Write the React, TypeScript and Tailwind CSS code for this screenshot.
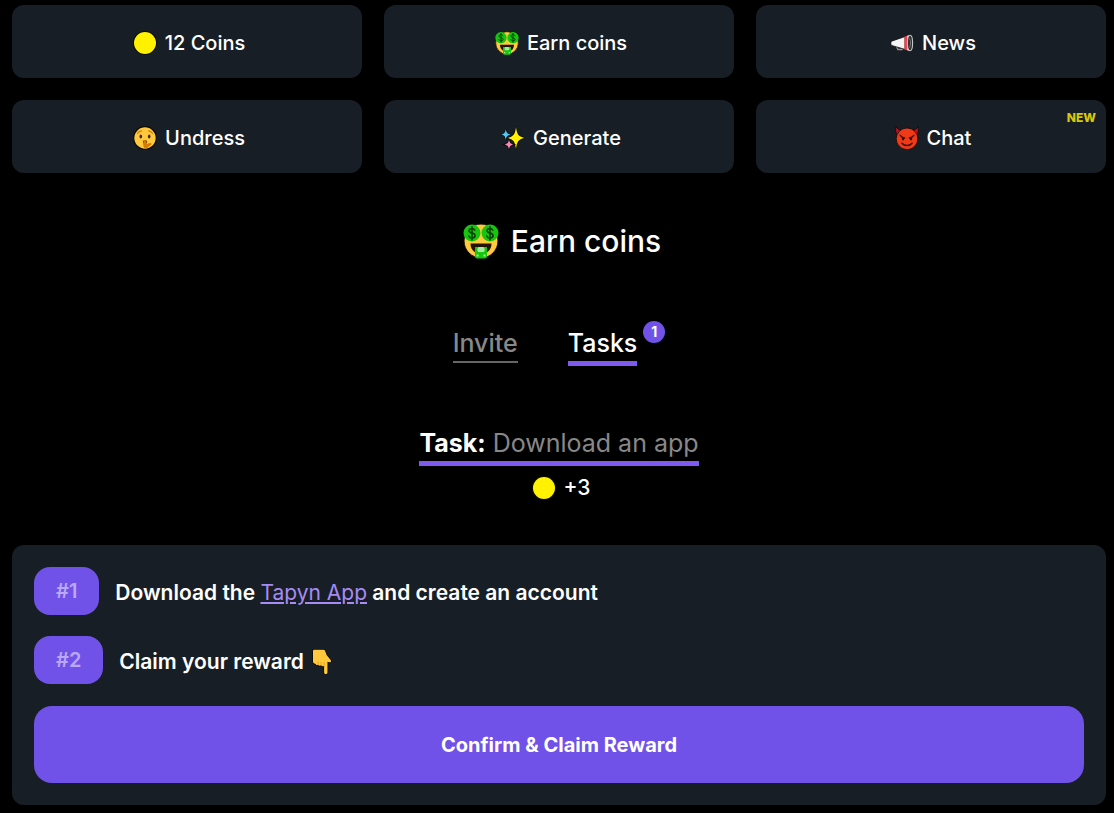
import { useState } from 'react'
import type { ReactNode } from 'react'

type IconProps = { className?: string }

function CoinIcon({ className }: IconProps) {
  return (
    <svg viewBox="0 0 24 24" className={className} aria-hidden="true">
      <circle cx="12" cy="12" r="12" fill="#0b0c00" />
      <circle cx="12" cy="12" r="11" fill="#fff100" />
    </svg>
  )
}

function MoneyFaceIcon({ className }: IconProps) {
  return (
    <svg viewBox="0 0 36 36" className={className} aria-hidden="true">
      <circle cx="18" cy="18" r="17" fill="#ffc83d" stroke="#0a0a0a" strokeWidth="1" />
      <circle cx="9" cy="10" r="8.5" fill="#16c60c" />
      <circle cx="27" cy="10" r="8.5" fill="#16c60c" />
      <g fill="none" stroke="#0a3a08" strokeWidth="1.5" strokeLinecap="round">
        <path d="M11.8 7.2C11.2 5.9 10 5.4 9 5.4c-1.7 0-3 .9-3 2.3 0 3 6.1 1.7 6.1 4.8 0 1.5-1.4 2.5-3.1 2.5-1.4 0-2.7-.7-3.2-2.1M9 3.7v13" />
        <path d="M29.8 7.2c-.6-1.3-1.8-1.8-2.8-1.8-1.7 0-3 .9-3 2.3 0 3 6.1 1.7 6.1 4.8 0 1.5-1.4 2.5-3.1 2.5-1.4 0-2.7-.7-3.2-2.1M27 3.7v13" />
      </g>
      <path d="M7.5 20.5h21c0 6-4.3 10.500-10.500 10.500s-10.500-4.500-10.500-10.500z" fill="#221508" />
      <path d="M12 24h12v9.500c0 1.200-.8 2-2 2h-8c-1.200 0-2-.8-2-2z" fill="#16c60c" />
      <rect x="14.500" y="24" width="7" height="5" rx="1.500" fill="#a7e8a2" />
      <path d="M13.500 31.500h2v2h-2zM20.500 31.500h2v2h-2z" fill="#a7e8a2" />
    </svg>
  )
}

function MegaphoneIcon({ className }: IconProps) {
  return (
    <svg viewBox="0 0 24 24" className={className} aria-hidden="true">
      <path d="M6 15l2 3.500h4l1-3" fill="none" stroke="#9a9a9a" strokeWidth="1.300" />
      <path d="M1.500 10.200L15 5.600v12.800L1.500 14.400c-.9-1.100-.9-3.100 0-4.200z" fill="#f5f5f5" stroke="#0a0a0a" strokeWidth=".8" />
      <path d="M14.500 5.700l2.500-.9v14.400l-2.500-.8z" fill="#f0404c" />
      <path d="M17 4.700l2.500-.7v16l-2.500-.8z" fill="#f7c4c7" />
      <ellipse cx="20" cy="12" rx="2.600" ry="7.800" fill="#303030" stroke="#c8c8c8" strokeWidth="1.100" />
      <path d="M19.500 7.500c1.400 2 1.400 7 0 9" fill="none" stroke="#777" strokeWidth="1" />
    </svg>
  )
}

function HushFaceIcon({ className }: IconProps) {
  return (
    <svg viewBox="0 0 24 24" className={className} aria-hidden="true">
      <circle cx="12" cy="12" r="11.300" fill="#ffc83d" stroke="#0a0a0a" strokeWidth="1.200" />
      <path d="M4.500 7.500c.8-1.600 2.200-2.500 4-2.600M15.500 4.900c1.800.1 3.200 1 4 2.600" fill="none" stroke="#d67d00" strokeWidth="1.200" strokeLinecap="round" />
      <ellipse cx="7.800" cy="10.500" rx="1.300" ry="1.900" fill="#402a32" />
      <ellipse cx="16.200" cy="10.500" rx="1.300" ry="1.900" fill="#402a32" />
      <circle cx="12" cy="16" r="2.100" fill="#5a3a20" />
      <path d="M11 14.300c.7-.6 1.800-.3 2 .6l.5 3 3.800-.9c1.200-.2 1.700 1.100.8 1.800l-3.800 3c-1.400 1-3.300.7-3.800-1.200l-.3-2z" fill="#d67d00" />
    </svg>
  )
}

function SparklesIcon({ className }: IconProps) {
  return (
    <svg viewBox="0 0 24 24" className={className} aria-hidden="true" stroke="#0a0a0a" strokeWidth="1.500" paintOrder="stroke">
      <path d="M15 .8c1 7.700 2.200 9.600 8.500 11.200-6.300 1.600-7.500 3.500-8.500 11.200-1-7.700-2.200-9.600-8.500-11.200C12.800 10.400 14 8.500 15 .8z" fill="#fff100" />
      <path d="M4.800 3c.6 3.800 1.500 4.700 4.700 5.500-3.200.8-4.100 1.700-4.700 5.500C4.200 10.200 3.300 9.300.1 8.500 3.300 7.700 4.200 6.800 4.800 3z" fill="#50c8f0" />
      <path d="M8 13.500c.6 3.400 1.500 4.200 4.500 5-3 .8-3.900 1.600-4.500 5-.6-3.400-1.500-4.200-4.500-5 3-.8 3.900-1.600 4.500-5z" fill="#f58bb4" />
    </svg>
  )
}

function DevilIcon({ className }: IconProps) {
  return (
    <svg viewBox="0 0 24 24" className={className} aria-hidden="true">
      <path d="M1 .8c-.8 3.500-.3 6.500 1.500 8.800l5.500-5C4.700 4.300 2.500 3.200 1 .8zM23 .8c.8 3.500.3 6.500-1.500 8.800l-5.500-5c3.300-.3 5.500-1.400 7-3.800z" fill="#c50f1f" stroke="#0a0a0a" strokeWidth=".8" />
      <circle cx="12" cy="12.800" r="10.800" fill="#f03a17" stroke="#0a0a0a" strokeWidth=".8" />
      <path d="M5 9.200c1.200 1.800 2.700 2.700 4.700 2.800M19 9.200c-1.200 1.800-2.700 2.700-4.700 2.800" fill="none" stroke="#3c1010" strokeWidth="1.300" strokeLinecap="round" />
      <ellipse cx="8" cy="12.800" rx="1.200" ry="1.700" fill="#3c1010" />
      <ellipse cx="16" cy="12.800" rx="1.200" ry="1.700" fill="#3c1010" />
      <path d="M7 17.200c2.500 3.200 7.500 3.200 10 0" fill="none" stroke="#3c1010" strokeWidth="1.500" strokeLinecap="round" />
    </svg>
  )
}

function PointDownIcon({ className }: IconProps) {
  return (
    <svg viewBox="0 0 20 26" className={className} aria-hidden="true">
      <path
        d="M1 1.500C1 1 1.400.8 2 .8h9.500c.8 0 1.300.4 1.600 1.100l1.500 4.100 3.900 4.700c1.200 1.500.3 3-1.300 2.600l-1.700-.5v10.700c0 2.300-3.400 2.300-3.400 0v-6.800c-1 .9-2.500.6-3-.4-1 .7-2.400.4-2.900-.6-1 .5-2.400.2-2.700-1C2.200 15 1 14 1 12.500z"
        fill="#ffc83d" stroke="#0a0a0a" strokeWidth="1.400" paintOrder="stroke"
      />
      <path d="M6.200 13v2.500M9.100 13.500V16M12.100 13.500v3.200" fill="none" stroke="#e39a1a" strokeWidth=".8" strokeLinecap="round" />
    </svg>
  )
}

const menu: { label: string; icon: ReactNode; isNew?: boolean }[] = [
  { label: '12 Coins', icon: <CoinIcon className="size-6" /> },
  { label: 'Earn coins', icon: <MoneyFaceIcon className="size-6" /> },
  { label: 'News', icon: <MegaphoneIcon className="size-6" /> },
  { label: 'Undress', icon: <HushFaceIcon className="size-6" /> },
  { label: 'Generate', icon: <SparklesIcon className="size-6" /> },
  { label: 'Chat', icon: <DevilIcon className="size-6" />, isNew: true },
]

function Step({ number, children }: { number: number; children: ReactNode }) {
  return (
    <li className="flex items-center gap-4">
      <span className="rounded-2xl bg-[#7152e8] px-[22px] py-2 text-xl leading-8 font-semibold text-[#b9a8f4]">#{number}</span>
      <p className="flex items-center pt-1 text-[21px] leading-8 font-semibold">{children}</p>
    </li>
  )
}

export default function App() {
  const [tab, setTab] = useState<'invite' | 'tasks'>('tasks')

  return (
    <div className="min-h-screen bg-black pt-[5px] pr-2 pb-2 pl-3 font-['Inter',sans-serif] text-white">
      <nav className="grid grid-cols-3 gap-[22px]">
        {menu.map((item) => (
          <button
            key={item.label}
            type="button"
            className="relative flex h-[73px] items-center justify-center gap-2 rounded-xl bg-[#181e25] pt-0.5 pl-1 text-xl leading-8 font-medium"
          >
            {item.icon}
            {item.label}
            {item.isNew && <span className="absolute top-2.5 right-2.5 text-xs leading-4 font-extrabold text-[#d9c70c]">NEW</span>}
          </button>
        ))}
      </nav>

      <main>
        <h1 className="mt-[46px] flex items-center justify-center gap-3 pl-1.5 text-[30px] leading-11 font-medium">
          <MoneyFaceIcon className="size-9" />
          Earn coins
        </h1>

        <div className="mt-[62px] flex items-start justify-center gap-[50px] text-[25px] leading-9 font-medium">
          <button
            type="button"
            onClick={() => setTab('invite')}
            className={tab === 'invite' ? 'border-b-[5px] border-[#7f5af0]' : 'border-b-2 border-[#666] text-[#888]'}
          >
            Invite
          </button>
          <button type="button" onClick={() => setTab('tasks')} className="flex items-start gap-1.5">
            <span className={tab === 'tasks' ? 'border-b-[5px] border-[#7f5af0]' : 'border-b-2 border-[#666] text-[#888]'}>Tasks</span>
            <span className="-mt-1 size-[22px] rounded-full bg-[#7152e8] text-sm leading-[22px] font-bold text-white">1</span>
          </button>
        </div>

        <div className="mt-[59px] flex flex-col items-center">
          <h2 className="border-b-[5px] border-[#7f5af0] text-[25px] leading-9 font-normal text-[#888]">
            <b className="font-bold text-white">Task:</b> Download an app
          </h2>
          <p className="mt-1 flex items-center gap-2 pl-1 text-[21px] leading-9 font-medium">
            <CoinIcon className="size-6" />
            +3
          </p>
        </div>

        <section className="mt-[39px] rounded-xl bg-[#181e25] p-[22px]">
          <ol className="space-y-[21px]">
            <Step number={1}>
              <span>
                Download the <a href="#" className="font-normal text-[#a68bf5] underline">Tapyn App</a> and create an account
              </span>
            </Step>
            <Step number={2}>
              Claim your reward
              <PointDownIcon className="ml-2 h-[26px] w-5" />
            </Step>
          </ol>
          <button type="button" className="mt-[22px] h-[77px] w-full rounded-[18px] bg-[#7152e8] text-xl font-bold">
            Confirm &amp; Claim Reward
          </button>
        </section>
      </main>
    </div>
  )
}
